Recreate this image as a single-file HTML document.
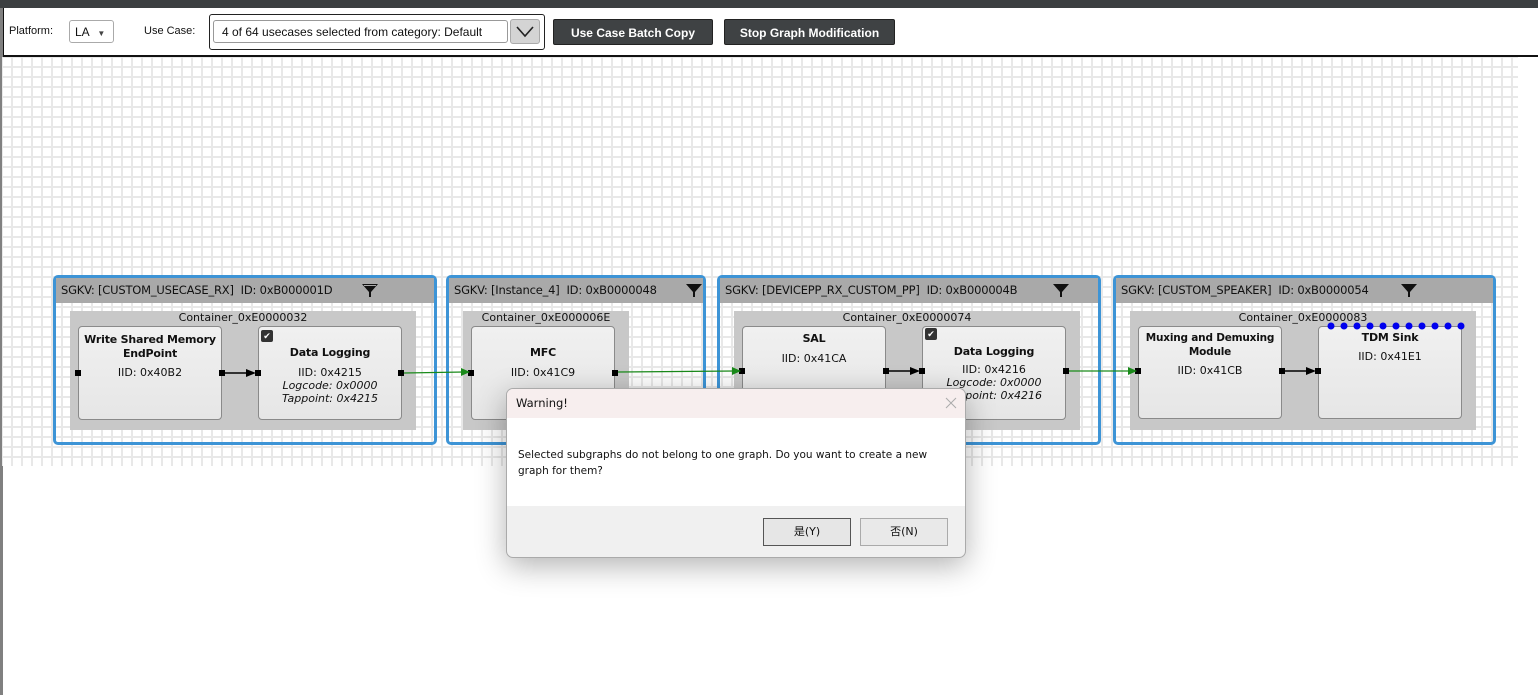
<!DOCTYPE html>
<html><head><meta charset="utf-8"><style>
*{box-sizing:border-box;margin:0;padding:0}
body{width:1538px;height:695px;position:relative;overflow:hidden;background:#fff;font-family:"Liberation Sans","Noto Sans CJK SC",sans-serif;font-size:12px;color:#111}
.a{position:absolute}
.grid{left:2px;top:57px;width:1516px;height:409px;background-color:#fff;background-image:linear-gradient(90deg,#e8e8e8 2px,transparent 2px),linear-gradient(#e8e8e8 2px,transparent 2px);background-size:10px 10px;background-position:9px 9px}
.btn{background:#3f4244;color:#fff;font-weight:bold;font-size:12px;text-align:center;line-height:24px;border-radius:2px;border:1px solid #222}
.sg{border:3px solid #3d94d6;border-radius:5px}
.hd{left:0;top:0;right:0;height:25px;background:#a9a9a9;font-family:"DejaVu Sans",sans-serif;font-size:11.5px;line-height:25px;padding-left:5px;color:#111;white-space:nowrap;letter-spacing:-0.2px}
.ct{background:#c8c8c8;font-family:"DejaVu Sans",sans-serif;font-size:11px;text-align:center}
.md{background:linear-gradient(#f0f0f0,#e6e6e6);border:1px solid #8a8a8a;border-radius:4px;text-align:center;font-family:"DejaVu Sans",sans-serif;font-size:11px;white-space:nowrap}
.md b{display:block;font-size:11px;line-height:14px;letter-spacing:-0.2px}
.ck{width:12px;height:12px;background:#333;border-radius:2px;color:#fff;font-size:9px;line-height:12px;text-align:center}
.fun{width:18px;height:18px}
.i{font-style:italic}
</style></head><body>
<div class="a" style="left:0;top:0;width:1538px;height:8px;background:#3c3f41"></div>
<div class="a" style="left:0;top:8px;width:3px;height:687px;background:#808080"></div>
<div class="a" style="left:3px;top:8px;width:1535px;height:49px;background:#fff;border-bottom:2px solid #111;border-left:1px solid #111"></div>
<div class="a" style="left:9px;top:25px;font-size:11px">Platform:</div>
<div class="a" style="left:69px;top:20px;width:45px;height:23px;border:1px solid #aaa;border-radius:3px;font-size:12px;line-height:23px;padding-left:5px">LA <span style="font-size:8px;color:#444;margin-left:5px">▼</span></div>
<div class="a" style="left:144px;top:25px;font-size:11px">Use Case:</div>
<div class="a" style="left:209px;top:14px;width:336px;height:36px;border:1px solid #222;border-radius:3px"></div>
<div class="a" style="left:213px;top:20px;width:295px;height:23px;border:1px solid #999;border-radius:3px;font-size:12px;line-height:23px;padding-left:8px">4 of 64 usecases selected from category: Default</div>
<div class="a" style="left:510px;top:19px;width:30px;height:25px;background:#d4d4d4;border:1px solid #aaa;border-radius:3px"><svg width="28" height="23"><path d="M6 7 L14 16 L22 7" fill="none" stroke="#222" stroke-width="1.6"/></svg></div>
<div class="a btn" style="left:553px;top:19px;width:160px;height:26px;line-height:26px">Use Case Batch Copy</div>
<div class="a btn" style="left:724px;top:19px;width:171px;height:26px;line-height:26px">Stop Graph Modification</div>

<div class="a grid"></div>

<div class="a sg" style="left:53px;top:275px;width:384px;height:170px"><div class="a hd">SGKV: [CUSTOM_USECASE_RX]&nbsp; ID: 0xB000001D</div>
<svg class="a fun" style="left:305px;top:3px" viewBox="0 0 18 18"><path d="M1 3 H17 L10 11 V16 H8 V11 Z" fill="#111"/><path d="M3 4.5 H15" stroke="#aaa" stroke-width="1"/></svg></div>
<div class="a ct" style="left:70px;top:311px;width:346px;height:119px">Container_0xE0000032</div>
<div class="a md" style="left:78px;top:326px;width:144px;height:94px;padding-top:6px"><b>Write Shared Memory<br>EndPoint</b><div style="margin-top:5px">IID: 0x40B2</div></div>
<div class="a md" style="left:258px;top:326px;width:144px;height:94px;padding-top:19px"><b>Data Logging</b><div style="margin-top:6px">IID: 0x4215</div><div class="i">Logcode: 0x0000</div><div class="i">Tappoint: 0x4215</div></div>
<div class="a ck" style="left:261px;top:330px">✔</div>

<div class="a sg" style="left:446px;top:275px;width:260px;height:170px"><div class="a hd">SGKV: [Instance_4]&nbsp; ID: 0xB0000048</div>
<svg class="a fun" style="left:236px;top:3px" viewBox="0 0 18 18"><path d="M1 3 H17 L10 11 V16 H8 V11 Z" fill="#111"/></svg></div>
<div class="a ct" style="left:463px;top:311px;width:166px;height:119px">Container_0xE000006E</div>
<div class="a md" style="left:471px;top:326px;width:144px;height:94px;padding-top:19px"><b>MFC</b><div style="margin-top:6px">IID: 0x41C9</div></div>

<div class="a sg" style="left:717px;top:275px;width:384px;height:170px"><div class="a hd">SGKV: [DEVICEPP_RX_CUSTOM_PP]&nbsp; ID: 0xB000004B</div>
<svg class="a fun" style="left:332px;top:3px" viewBox="0 0 18 18"><path d="M1 3 H17 L10 11 V16 H8 V11 Z" fill="#111"/></svg></div>
<div class="a ct" style="left:734px;top:311px;width:346px;height:119px">Container_0xE0000074</div>
<div class="a md" style="left:742px;top:326px;width:144px;height:94px;padding-top:5px"><b>SAL</b><div style="margin-top:6px">IID: 0x41CA</div></div>
<div class="a md" style="left:922px;top:326px;width:144px;height:94px;padding-top:18px"><b>Data Logging</b><div style="margin-top:4px">IID: 0x4216</div><div class="i">Logcode: 0x0000</div><div class="i">Tappoint: 0x4216</div></div>
<div class="a ck" style="left:925px;top:328px">✔</div>

<div class="a sg" style="left:1113px;top:275px;width:383px;height:170px"><div class="a hd">SGKV: [CUSTOM_SPEAKER]&nbsp; ID: 0xB0000054</div>
<svg class="a fun" style="left:284px;top:3px" viewBox="0 0 18 18"><path d="M1 3 H17 L10 11 V16 H8 V11 Z" fill="#111"/></svg></div>
<div class="a ct" style="left:1130px;top:311px;width:346px;height:119px">Container_0xE0000083</div>
<div class="a md" style="left:1138px;top:326px;width:144px;height:93px;padding-top:4px"><b style="font-size:10.5px">Muxing and Demuxing<br>Module</b><div style="margin-top:5px">IID: 0x41CB</div></div>
<div class="a md" style="left:1318px;top:326px;width:144px;height:93px;padding-top:4px"><b>TDM Sink</b><div style="margin-top:5px">IID: 0x41E1</div></div>

<svg class="a" style="left:0;top:0" width="1538" height="695">
<g fill="#000">
<rect x="75" y="370" width="6" height="6"/><rect x="219" y="370" width="6" height="6"/><rect x="255" y="370" width="6" height="6"/><rect x="398" y="370" width="6" height="6"/>
<rect x="468" y="370" width="6" height="6"/><rect x="612" y="370" width="6" height="6"/>
<rect x="739" y="368" width="6" height="6"/><rect x="883" y="368" width="6" height="6"/><rect x="919" y="368" width="6" height="6"/><rect x="1063" y="368" width="6" height="6"/>
<rect x="1135" y="368" width="6" height="6"/><rect x="1279" y="368" width="6" height="6"/><rect x="1315" y="368" width="6" height="6"/>
</g>
<g stroke="#000" stroke-width="1.5"><line x1="225" y1="373" x2="250" y2="373"/><line x1="889" y1="371" x2="914" y2="371"/><line x1="1285" y1="371" x2="1310" y2="371"/></g>
<g fill="#000"><path d="M246 369 L256 373 L246 377Z"/><path d="M910 367 L920 371 L910 375Z"/><path d="M1306 367 L1316 371 L1306 375Z"/></g>
<g stroke="#1a8a1a" stroke-width="1.3" fill="none"><path d="M404 373 L464 372"/><path d="M618 372 L735 371"/><path d="M1069 371 L1131 371"/></g>
<g fill="#1a8a1a"><path d="M461 368 L470 372 L461 376Z"/><path d="M732 367 L741 371 L732 375Z"/><path d="M1128 367 L1137 371 L1128 375Z"/></g>
<g fill="#0000ee"><circle cx="1331" cy="326" r="3.5"/><circle cx="1344" cy="326" r="3.5"/><circle cx="1357" cy="326" r="3.5"/><circle cx="1370" cy="326" r="3.5"/><circle cx="1383" cy="326" r="3.5"/><circle cx="1396" cy="326" r="3.5"/><circle cx="1409" cy="326" r="3.5"/><circle cx="1422" cy="326" r="3.5"/><circle cx="1435" cy="326" r="3.5"/><circle cx="1448" cy="326" r="3.5"/><circle cx="1461" cy="326" r="3.5"/></g>
</svg>

<div class="a" style="left:506px;top:388px;width:460px;height:170px;border:1px solid #aaa;border-radius:7px;overflow:hidden;box-shadow:0 8px 30px rgba(0,0,0,0.3);background:#f0f0f0;font-family:'DejaVu Sans','Noto Sans CJK SC',sans-serif">
<div class="a" style="left:0;top:0;width:460px;height:29px;background:#f7eeee;font-size:11.5px;line-height:29px;padding-left:9px">Warning!</div>
<svg class="a" style="left:438px;top:8px" width="12" height="12"><path d="M1 1L11 11M11 1L1 11" stroke="#aaa" stroke-width="1"/></svg>
<div class="a" style="left:0;top:29px;width:460px;height:88px;background:#fff;font-size:10.5px;line-height:16px;padding:29px 0 0 11px">Selected subgraphs do not belong to one graph. Do you want to create a new<br>graph for them?</div>
<div class="a" style="left:256px;top:129px;width:88px;height:28px;border:1px solid #555;background:#e6e6e6;text-align:center;line-height:26px;font-size:11px">是(Y)</div>
<div class="a" style="left:353px;top:129px;width:88px;height:28px;border:1px solid #aaa;background:#e9e9e9;text-align:center;line-height:26px;font-size:11px">否(N)</div>
</div>
</body></html>
